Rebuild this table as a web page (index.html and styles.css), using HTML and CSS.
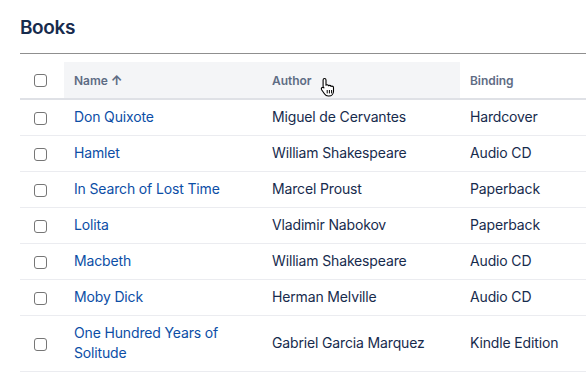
FILE: index.html
```html
<!DOCTYPE html>
<html>
<head>
<meta charset="utf-8">
<link rel="stylesheet" href="styles.css">
</head>
<body>
<div class="page">
  <h2 class="title">Books</h2>
  <div class="rule"></div>
  <table class="books">
    <colgroup>
      <col class="c-check">
      <col class="c-name">
      <col class="c-author">
      <col class="c-binding">
    </colgroup>
    <thead>
      <tr>
        <th class="check"><span class="box"></span></th>
        <th class="sorted">Name <span class="arrow">&#x2191;</span></th>
        <th class="hover">Author
          <svg class="cursor" width="16" height="20" viewBox="0 0 16 20"><path d="M4.5 1.5c.8 0 1.5.6 1.5 1.4v5.3c.3-.3.7-.4 1.1-.4.7 0 1.2.4 1.4 1 .3-.3.7-.4 1.1-.4.7 0 1.2.4 1.4 1 .2-.2.6-.3 1-.3.9 0 1.5.7 1.5 1.5v3.6c0 2.6-1.9 4.8-4.5 4.8H8.2c-1.6 0-2.7-.7-3.6-2L1.6 12.7c-.5-.8-.2-1.7.5-2.1.6-.4 1.4-.3 1.9.3l-.9-.9V2.9c0-.8.6-1.4 1.4-1.4z" fill="#fff" stroke="#000" stroke-width="1.1" stroke-linejoin="round"/><path d="M7.2 13v3.4M9.4 13v3.4M11.6 13v3.4" stroke="#000" stroke-width="1"/></svg>
        </th>
        <th>Binding</th>
      </tr>
    </thead>
    <tbody>
      <tr><td class="check"><span class="box"></span></td><td><a href="#">Don Quixote</a></td><td>Miguel de Cervantes</td><td>Hardcover</td></tr>
      <tr><td class="check"><span class="box"></span></td><td><a href="#">Hamlet</a></td><td>William Shakespeare</td><td>Audio CD</td></tr>
      <tr><td class="check"><span class="box"></span></td><td><a href="#">In Search of Lost Time</a></td><td>Marcel Proust</td><td>Paperback</td></tr>
      <tr><td class="check"><span class="box"></span></td><td><a href="#">Lolita</a></td><td>Vladimir Nabokov</td><td>Paperback</td></tr>
      <tr><td class="check"><span class="box"></span></td><td><a href="#">Macbeth</a></td><td>William Shakespeare</td><td>Audio CD</td></tr>
      <tr><td class="check"><span class="box"></span></td><td><a href="#">Moby Dick</a></td><td>Herman Melville</td><td>Audio CD</td></tr>
      <tr><td class="check"><span class="box"></span></td><td><a href="#">One Hundred Years of Solitude</a></td><td>Gabriel Garcia Marquez</td><td>Kindle Edition</td></tr>
    </tbody>
  </table>
</div>
</body>
</html>
```
FILE: styles.css
```css
html, body {
  margin: 0;
  padding: 0;
  background: #fff;
}
body {
  font-family: Inter, "Noto Sans", "Liberation Sans", sans-serif;
  color: #172b4d;
  overflow: hidden;
}
.page {
  padding: 16px 0 0 20px;
}
.title {
  margin: 0;
  font-size: 19px;
  font-weight: 600;
  line-height: 24px;
  color: #172b4d;
  letter-spacing: -0.4px;
}
.rule {
  margin-top: 13px;
  height: 1px;
  background: #8f8f8f;
}
.books {
  margin-top: 8px;
  border-collapse: collapse;
  table-layout: fixed;
  width: 566px;
}
.c-check { width: 44px; }
.c-name { width: 198px; }
.c-author { width: 198px; }
.c-binding { width: 126px; }
th {
  text-align: left;
  font-size: 12px;
  font-weight: 600;
  color: #5e6c84;
  height: 36px;
  padding: 0 10px;
  border-bottom: 2px solid #dfe1e6;
  position: relative;
  letter-spacing: -0.05px;
}
th.sorted, th.hover {
  background: #f4f5f7;
}
.arrow {
  font-size: 13px;
  font-weight: 700;
  color: #5e6c84;
}
td {
  font-size: 14px;
  line-height: 20px;
  padding: 7px 10px 8px;
  border-bottom: 1px solid #ebecf0;
  vertical-align: middle;
  letter-spacing: -0.15px;
  white-space: normal;
}
td.check, th.check {
  padding: 0 0 0 14px;
}
td.check {
  padding-top: 2px;
}
.box {
  display: block;
  width: 11px;
  height: 11px;
  border: 1px solid #767676;
  border-radius: 3px;
  background: #fff;
}
a {
  color: #0c4ea6;
  text-decoration: none;
}
.cursor {
  position: absolute;
  left: 58px;
  top: 15px;
}
```
